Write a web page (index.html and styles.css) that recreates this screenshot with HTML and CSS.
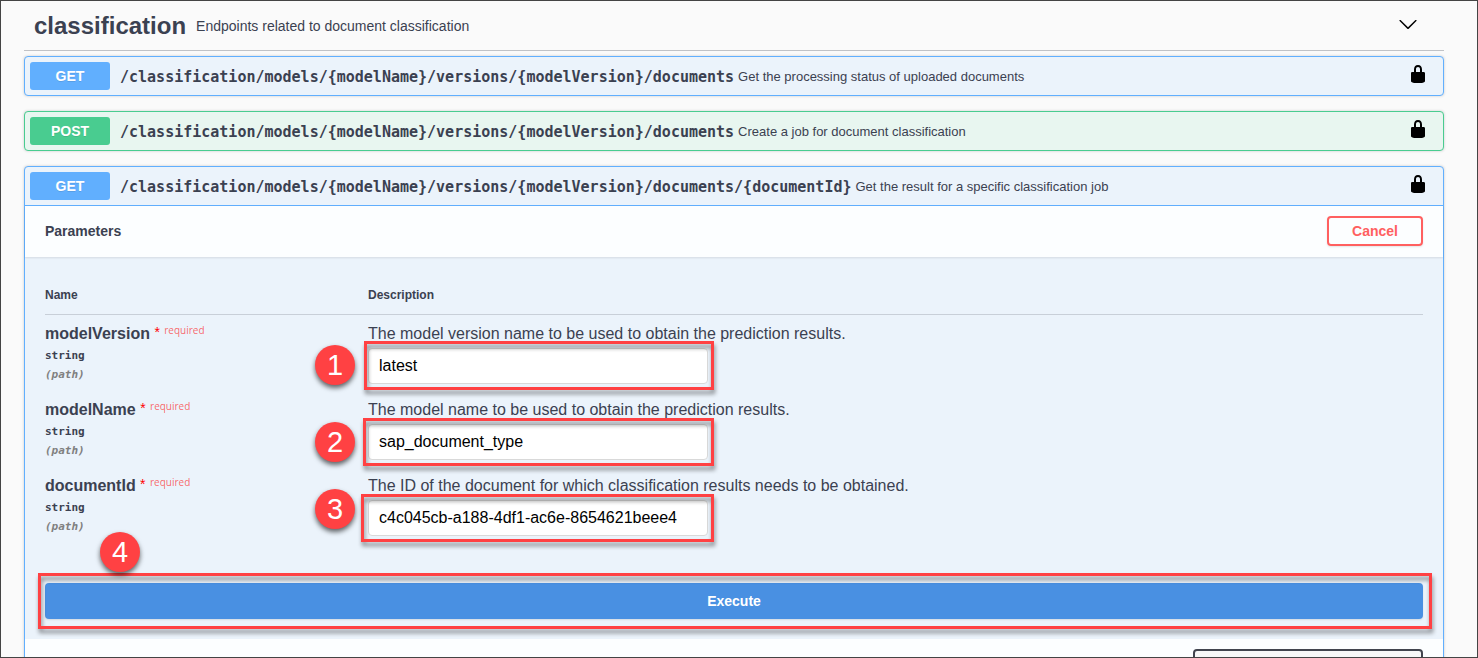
FILE: index.html
```html
<!DOCTYPE html>
<html lang="en">
<head>
<meta charset="utf-8">
<title>classification API</title>
<link rel="stylesheet" href="styles.css">
</head>
<body>
<svg class="sprite" aria-hidden="true">
  <symbol id="lock" viewBox="0 0 20 20"><path d="M15.8 8H14V5.6C14 2.703 12.665 1 10 1 7.334 1 6 2.703 6 5.6V8H4c-.553 0-1 .646-1 1.199V17c0 .549.428 1.139.951 1.307l1.197.387C5.672 18.861 6.55 19 7.1 19h5.8c.549 0 1.428-.139 1.951-.307l1.196-.387c.524-.167.953-.757.953-1.306V9.199C17 8.646 16.352 8 15.8 8zM12 8H8V5.199C8 3.754 8.797 3 10 3c1.203 0 2 .754 2 2.199V8z"/></symbol>
  <symbol id="arrow" viewBox="0 0 20 20"><path d="M17.418 6.109c.272-.268.709-.268.979 0s.271.701 0 .969l-7.908 7.83c-.27.268-.707.268-.979 0l-7.908-7.83c-.27-.268-.27-.701 0-.969.271-.268.709-.268.979 0L10 13.25l7.418-7.141z"/></symbol>
</svg>
<main class="page">
  <header class="tag">
    <h3 class="tag-name">classification</h3>
    <p class="tag-text">Endpoints related to document classification</p>
    <button class="icon-button" aria-label="Collapse section"><svg class="icon"><use href="#arrow"/></svg></button>
  </header>

  <section class="op op-get">
    <div class="op-summary">
      <span class="method">GET</span>
      <span class="path">/classification/models/{modelName}/versions/{modelVersion}/documents</span>
      <span class="op-text">Get the processing status of uploaded documents</span>
      <button class="icon-button" aria-label="Authorization"><svg class="icon"><use href="#lock"/></svg></button>
    </div>
  </section>

  <section class="op op-post">
    <div class="op-summary">
      <span class="method">POST</span>
      <span class="path">/classification/models/{modelName}/versions/{modelVersion}/documents</span>
      <span class="op-text">Create a job for document classification</span>
      <button class="icon-button" aria-label="Authorization"><svg class="icon"><use href="#lock"/></svg></button>
    </div>
  </section>

  <section class="op op-get op-open">
    <div class="op-summary">
      <span class="method">GET</span>
      <span class="path">/classification/models/{modelName}/versions/{modelVersion}/documents/{documentId}</span>
      <span class="op-text">Get the result for a specific classification job</span>
      <button class="icon-button" aria-label="Authorization"><svg class="icon"><use href="#lock"/></svg></button>
    </div>
    <div class="section-bar">
      <h4 class="section-title">Parameters</h4>
      <button class="cancel">Cancel</button>
    </div>
    <div class="params">
      <table class="params-table">
        <thead>
          <tr><th class="col-name">Name</th><th>Description</th></tr>
        </thead>
        <tbody>
          <tr>
            <td>
              <label class="param-name" for="modelVersion">modelVersion <span class="star">*</span> <span class="required">required</span></label>
              <div class="param-type">string</div>
              <div class="param-in">(path)</div>
            </td>
            <td>
              <p class="param-text">The model version name to be used to obtain the prediction results.</p>
              <div class="field">
                <input class="param-input" id="modelVersion" type="text" value="latest">
                <span class="frame"></span><span class="badge badge-1">1</span>
              </div>
            </td>
          </tr>
          <tr>
            <td>
              <label class="param-name" for="modelName">modelName <span class="star">*</span> <span class="required">required</span></label>
              <div class="param-type">string</div>
              <div class="param-in">(path)</div>
            </td>
            <td>
              <p class="param-text">The model name to be used to obtain the prediction results.</p>
              <div class="field">
                <input class="param-input" id="modelName" type="text" value="sap_document_type">
                <span class="frame frame-2"></span><span class="badge badge-2">2</span>
              </div>
            </td>
          </tr>
          <tr>
            <td>
              <label class="param-name" for="documentId">documentId <span class="star">*</span> <span class="required">required</span></label>
              <div class="param-type">string</div>
              <div class="param-in">(path)</div>
            </td>
            <td>
              <p class="param-text">The ID of the document for which classification results needs to be obtained.</p>
              <div class="field">
                <input class="param-input" id="documentId" type="text" value="c4c045cb-a188-4df1-ac6e-8654621beee4">
                <span class="frame frame-3"></span><span class="badge badge-3">3</span>
              </div>
            </td>
          </tr>
        </tbody>
      </table>
    </div>
    <div class="execute-row">
      <div class="execute-wrap">
        <button class="execute">Execute</button>
        <span class="frame frame-4"></span><span class="badge badge-4">4</span>
      </div>
    </div>
    <div class="section-bar responses">
      <select class="content-type" aria-label="Response content type"><option>application/json</option></select>
    </div>
  </section>
</main>
</body>
</html>
```
FILE: styles.css
```css
* { box-sizing: border-box; }

body {
  margin: 0;
  color: #3b4151;
  background: #fafafa;
  font-family: "Liberation Sans", Arial, sans-serif;
}

h3, h4, p { margin: 0; }

button { font-family: inherit; cursor: pointer; }

.sprite { display: none; }

.page {
  height: 100vh;
  overflow: hidden;
  padding: 0 33px 0 23px;
  border: 1px solid #444;
}

.icon-button {
  display: flex;
  flex: none;
  margin-left: auto;
  padding: 0;
  border: 0;
  background: none;
}

.icon { width: 20px; height: 20px; }

/* Tag header */
.tag {
  display: flex;
  align-items: center;
  height: 50px;
  margin-bottom: 5px;
  padding: 0 26px 0 10px;
  border-bottom: 1px solid rgba(59, 65, 81, .3);
}

.tag-name { font-size: 24px; line-height: 28px; }
.tag-text { padding-left: 10px; font-size: 14px; line-height: 20px; }
.tag .icon-button { padding-bottom: 4px; }

/* Operation blocks */
.op {
  margin-bottom: 15px;
  border: 1px solid;
  border-radius: 4px;
  box-shadow: 0 0 3px rgba(0, 0, 0, .19);
}

.op-get { border-color: #61affe; background: #ebf3fb; }
.op-post { border-color: #49cc90; background: #e8f6f0; }

.op-summary {
  display: flex;
  align-items: center;
  padding: 5px;
}

.op-open .op-summary { border-bottom: 1px solid #61affe; }

.method {
  flex: none;
  width: 80px;
  border-radius: 3px;
  color: #fff;
  font-size: 14px;
  font-weight: 700;
  line-height: 28px;
  text-align: center;
  text-shadow: 0 1px 0 rgba(0, 0, 0, .1);
}

.op-get .method { background: #61affe; }
.op-post .method { background: #49cc90; }

.path {
  padding: 2px 0 0 10px;
  font-family: "DejaVu Sans Mono", monospace;
  font-size: 15px;
  font-weight: 700;
  line-height: 20px;
}

.op-text { padding: 2px 0 0 4px; font-size: 13px; line-height: 20px; }
.op-summary .icon-button { padding: 0 10px 4px 0; }

/* Parameters */
.section-bar {
  display: flex;
  align-items: center;
  justify-content: space-between;
  height: 51px;
  padding: 0 20px 2px;
  background: rgba(255, 255, 255, .85);
  box-shadow: 0 1px 2px rgba(0, 0, 0, .1);
}

.section-title { font-size: 14px; line-height: 20px; }

.cancel {
  width: 96px;
  height: 30px;
  border: 2px solid #ff6060;
  border-radius: 4px;
  color: #ff6060;
  background: transparent;
  box-shadow: 0 1px 2px rgba(0, 0, 0, .1);
  font-size: 14px;
  font-weight: 700;
}

.params { padding: 20px; }

.params-table { width: 100%; border-collapse: separate; border-spacing: 0; }

.params-table th {
  padding: 12px 0;
  border-bottom: 1px solid rgba(59, 65, 81, .2);
  font-size: 12px;
  line-height: 13px;
  text-align: left;
}

.col-name { width: 323px; }

.params-table td { padding: 10px 0 0; vertical-align: top; }

.param-name {
  display: block;
  font-size: 16px;
  font-weight: 700;
  line-height: 18px;
}

.star {
  color: #f00;
  font-size: 14px;
  font-weight: 400;
  line-height: 10px;
  vertical-align: 2px;
}

.required {
  color: rgba(255, 0, 0, .6);
  font-family: "Open Sans", sans-serif;
  font-size: 10px;
  font-weight: 500;
  line-height: 8px;
  vertical-align: 5px;
}

.param-type, .param-in {
  font-family: "DejaVu Sans Mono", monospace;
  font-size: 11px;
  font-weight: 700;
  line-height: 14px;
}

.param-type { padding: 6px 0 5px; }
.param-in { color: #808080; font-style: italic; }

.param-text { font-size: 16px; line-height: 18px; }

.field {
  position: relative;
  width: 340px;
  padding: 5px 0 7px;
}

.param-input {
  display: block;
  width: 100%;
  height: 36px;
  padding: 0 10px;
  border: 1px solid #d9d9d9;
  border-radius: 4px;
  color: #000;
  background: #fff;
  font-family: inherit;
  font-size: 16px;
}

.execute-row { padding: 20px; }
.execute-wrap { position: relative; }

.execute {
  display: block;
  width: 100%;
  height: 36px;
  border: 0;
  border-radius: 4px;
  color: #fff;
  background: #4990e2;
  box-shadow: 0 1px 2px rgba(0, 0, 0, .1);
  font-size: 14px;
  font-weight: 700;
}

.responses { justify-content: flex-end; padding-bottom: 0; box-shadow: none; }

.content-type {
  width: 230px;
  height: 32px;
  border: 2px solid #41444e;
  border-radius: 4px;
  background: #f7f7f7;
}

/* Callouts laid over the controls */
.frame {
  position: absolute;
  inset: -2px -6px 1px -4px;
  border: 3px solid #ff4143;
  filter: drop-shadow(1px 4px 2px rgba(0, 0, 0, .45));
  pointer-events: none;
}

.frame-2 { inset: -1px -6px 1px -5px; }
.frame-3 { inset: -1px -6px 1px -7px; }
.frame-4 { inset: -10px -9px -10px -7px; }

.badge {
  position: absolute;
  left: -53px;
  width: 40px;
  height: 40px;
  border-radius: 50%;
  color: #fff;
  background: #ff4143;
  box-shadow: 0 3px 5px rgba(0, 0, 0, .6);
  font-size: 29px;
  line-height: 40px;
  text-align: center;
}

.badge-1 { top: 2px; }
.badge-2 { top: 3px; }
.badge-3 { top: -6px; }
.badge-4 { top: -51px; left: 55px; }
```
